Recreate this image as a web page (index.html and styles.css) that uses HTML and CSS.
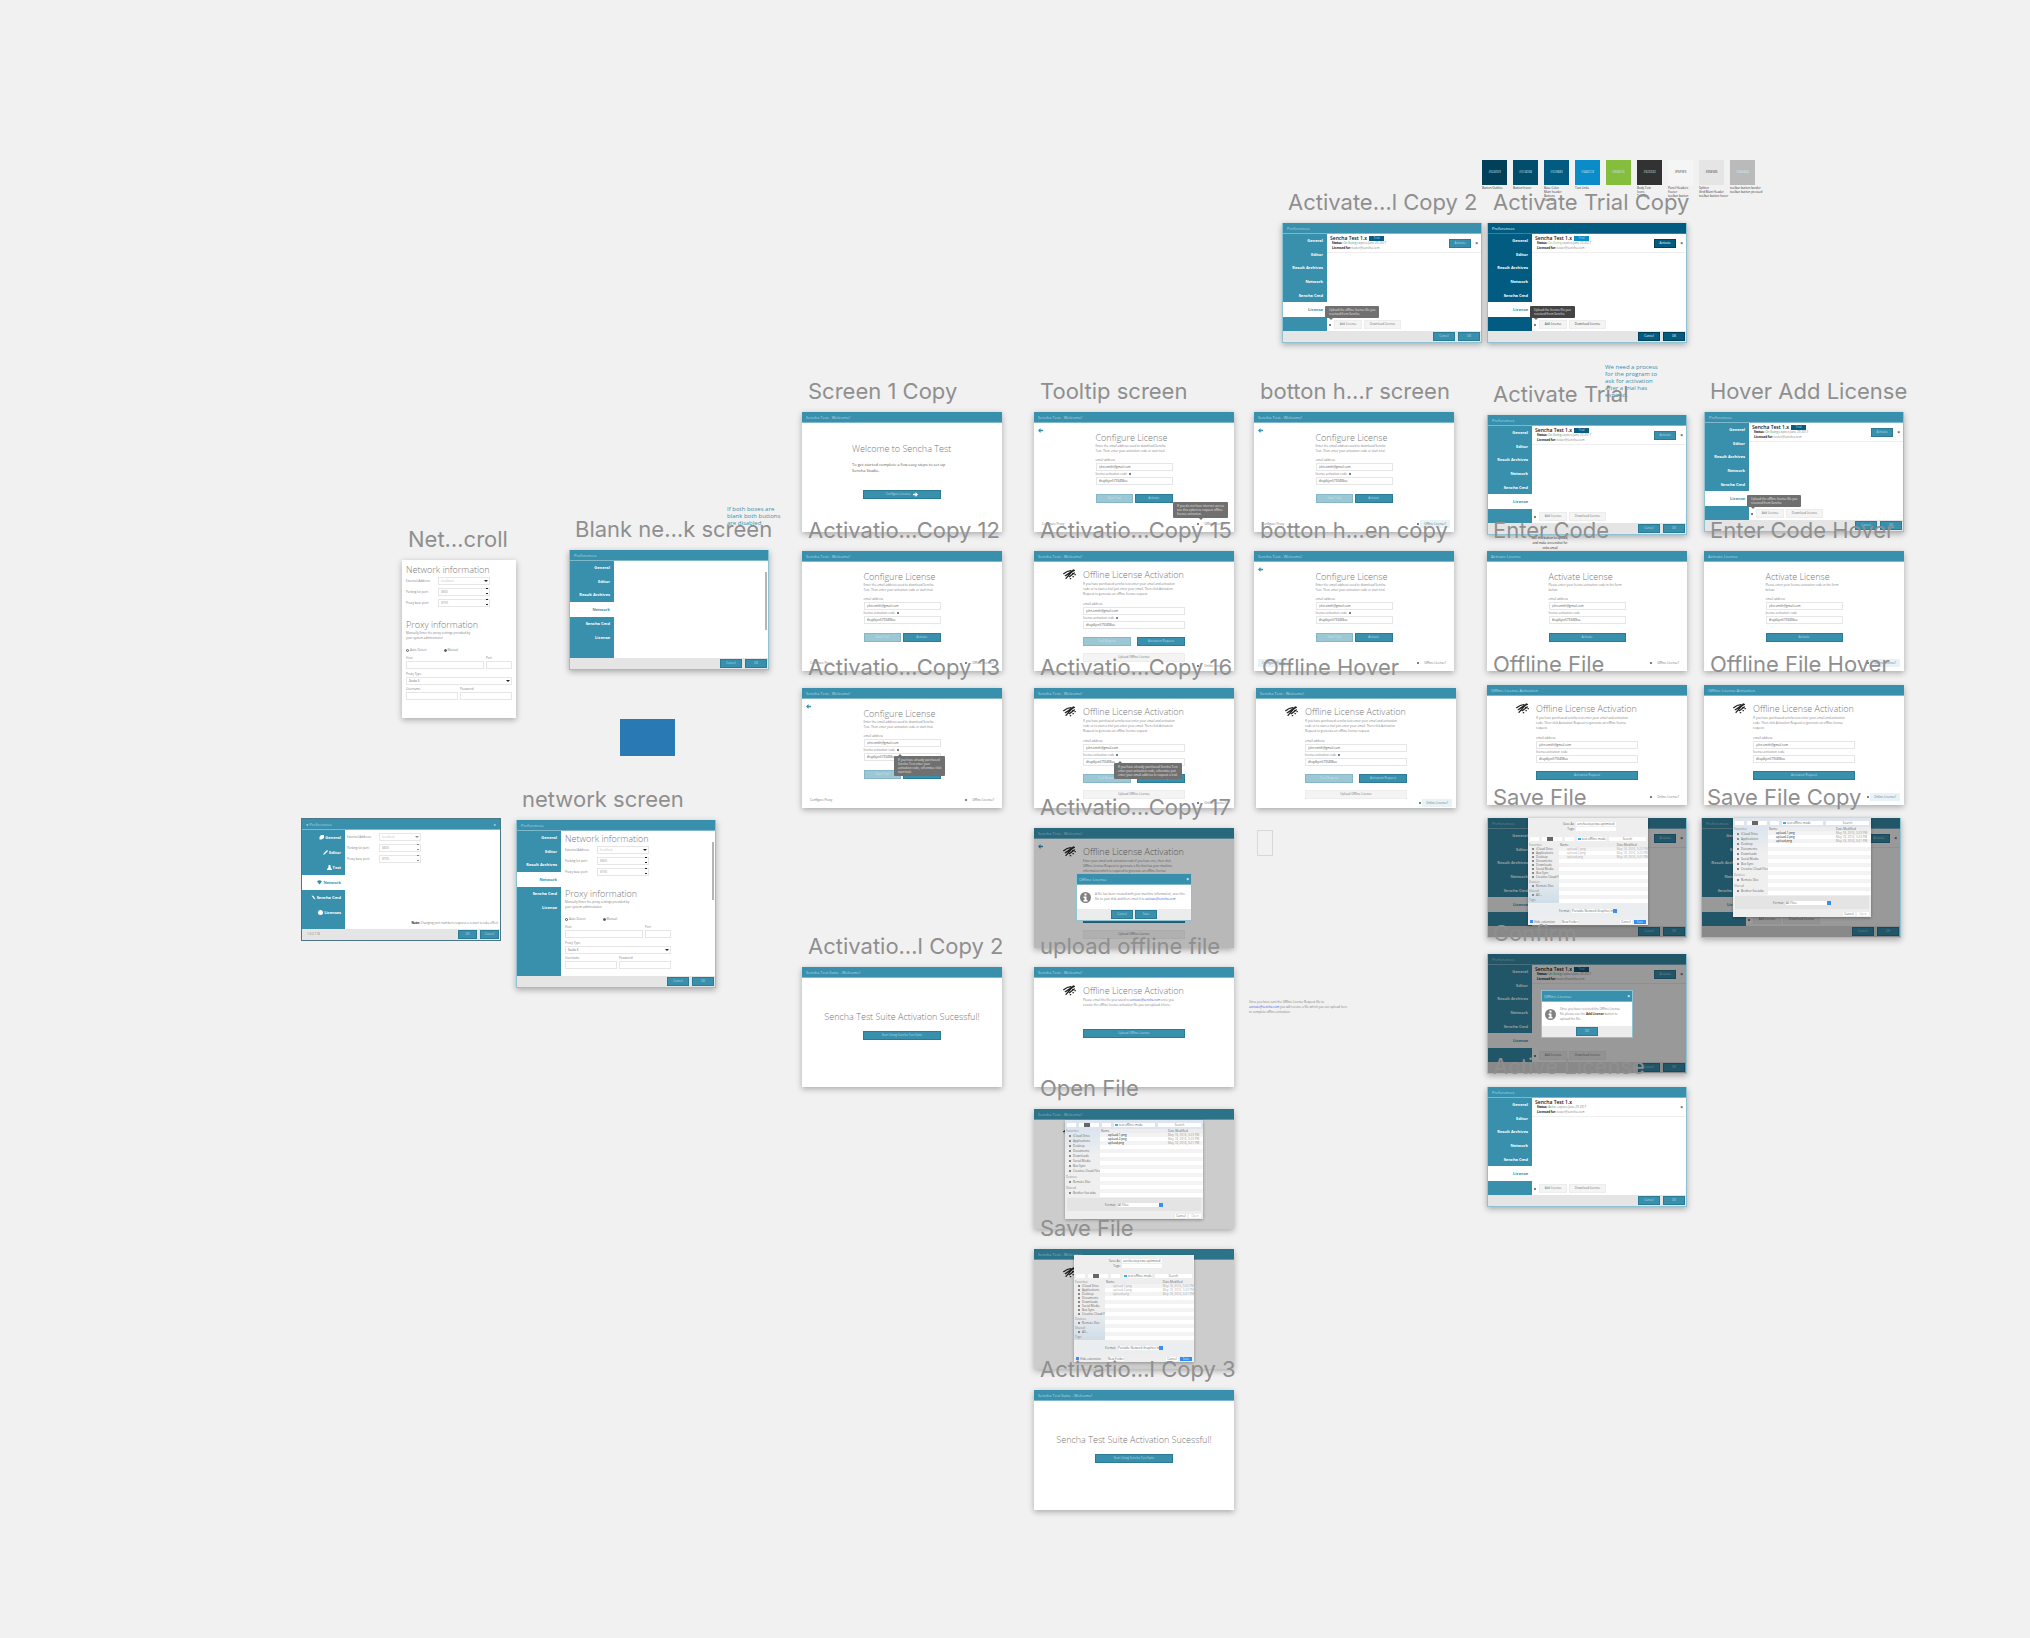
FILE: index.html
```
<!DOCTYPE html>
<html lang="en">
<head>
<meta charset="UTF-8" />
<meta name="viewport" content="width=device-width, initial-scale=1" />
<title>Sencha Test - Artboards</title>
<link rel="stylesheet" href="styles.css">
</head>
<body>

<main id="canvas"></main>

<script src="script.js"></script>
</body>
</html>
```

FILE: styles.css
```
* {
  box-sizing: border-box;
}
body {
  margin: 0;
  font-family: "Open Sans", "Noto Sans", sans-serif;
  background: #f1f1f1;
  color: #808080;
}
#canvas {
  position: relative;
  min-height: 100vh;
  font-size: 3px;
  line-height: 5px;
  overflow: hidden;
}
h2, p, figure, ul, table {
  margin: 0;
  padding: 0;
}
input, select, button {
  font: inherit;
  color: inherit;
  margin: 0;
  padding: 0;
  border: 0;
  border-radius: 0;
  background: none;
  appearance: none;
}
svg {
  display: block;
  fill: currentColor;
}

/* artboards */
.artboard {
  position: absolute;
  width: 200px;
}
.artboard figcaption {
  position: absolute;
  z-index: 1;
  left: 6px;
  top: -35px;
  font-family: Inter, sans-serif;
  font-size: 22px;
  line-height: 28px;
  color: #8f8f8f;
  white-space: nowrap;
}
.board {
  position: relative;
  display: flex;
  flex-direction: column;
  height: 120px;
  background: #fff;
  box-shadow: 0 2px 6px rgba(0,0,0,0.3);
}
.board.tall {
  height: 168px;
}
.titlebar {
  flex: none;
  display: flex;
  align-items: center;
  justify-content: space-between;
  height: 11px;
  padding: 0 4px;
  background: #3890ad;
  border-bottom: 1px solid #7fb8cb;
  color: #b9dae4;
  font-size: 4px;
}
.dim {
  position: absolute;
  inset: 0;
  background: rgba(0,0,0,0.4);
}
.dim.soft {
  background: rgba(0,0,0,0.28);
}
.dim.light {
  background: rgba(0,0,0,0.2);
}

/* buttons */
.btn {
  height: 9px;
  border: 1px solid #2b7b96;
  background: #3890ad;
  color: #b9dae4;
  font-size: 3px;
  line-height: 5px;
  text-align: center;
  flex: 1;
}
.btn.off {
  background: #9cc7d5;
  border-color: #86b7c8;
  color: #cde4eb;
}
.btn.plain {
  background: #f4f4f4;
  border-color: #ededed;
  color: #777;
}
.btn.small {
  flex: none;
  width: 22px;
}
.btn.wide {
  flex: none;
  width: 78px;
}
.buttons {
  display: flex;
  gap: 2px;
  margin-top: 9px;
}
.offline .buttons {
  margin-top: 8px;
}
.buttons.spaced {
  gap: 6px;
}
.btn svg {
  display: inline-block;
  vertical-align: middle;
  width: 5px;
  height: 5px;
  margin-left: 2px;
  color: #fff;
}

/* welcome, configure and offline screens */
.screen {
  position: relative;
  flex: 1;
  display: flex;
  flex-direction: column;
  align-items: center;
  padding: 9px 4px 4px;
}
.screen h2, .network h2 {
  font-size: 9px;
  line-height: 12px;
  font-weight: 300;
  color: #777;
  white-space: nowrap;
}
.form {
  width: 77px;
}
.form.offline {
  width: 102px;
}
.screen.top {
  padding-top: 7px;
}
.form p {
  margin-bottom: 4px;
  white-space: nowrap;
}
.form.offline p {
  margin-bottom: 5px;
  padding-top: 1px;
}
.field {
  display: block;
  margin-bottom: 1px;
}
.field span {
  display: block;
  line-height: 5px;
}
.field input, .pick select, .pick input {
  display: block;
  width: 100%;
  height: 8px;
  padding: 0 2px;
  background: #fff;
  border: 1px solid #e6e6e6;
  color: #555;
  line-height: 5px;
}
.pick select, .pick input {
  color: #999;
}
.pick.full select {
  color: #555;
}
.links {
  display: flex;
  justify-content: space-between;
  align-items: center;
  width: 100%;
  margin-top: auto;
}
.links a {
  padding: 2px 4px;
  line-height: 4px;
  color: #777;
  text-decoration: none;
}
.links a.hover {
  background: #e7f3f7;
}
.links div {
  display: flex;
  align-items: center;
  gap: 1px;
}
.dot {
  display: inline-block;
  width: 2px;
  height: 2px;
  border-radius: 50%;
  background: #555;
  vertical-align: middle;
}
.back {
  position: absolute;
  left: 4px;
  top: 5px;
  width: 5px;
  height: 5px;
  color: #3890ad;
}
.back svg {
  width: 5px;
  height: 5px;
}
.wifi {
  position: absolute;
  left: 29px;
  top: 7px;
  width: 13px;
  height: 11px;
  color: #222;
}
.welcome {
  padding-top: 20px;
}
.welcome .intro {
  width: 100px;
}
.welcome p {
  margin: 7px 0 16px;
  font-size: 4px;
  line-height: 6px;
  color: #555;
  white-space: nowrap;
}
.success {
  padding-top: 33px;
}
.success .btn {
  margin-top: 8px;
}
.upload-button {
  display: flex;
  margin-top: 7px;
}
.form.upload .buttons {
  margin-top: 21px;
}
.mail {
  color: #3b52e0;
}

/* preferences */
.prefs {
  border: 1px solid #8fc3d3;
  border-top: 0;
}
.prefs-main {
  flex: 1;
  display: flex;
  min-height: 0;
}
.sidebar {
  flex: none;
  display: flex;
  flex-direction: column;
  width: 44px;
  padding-bottom: 14px;
  background: #3890ad;
  color: #fff;
  list-style: none;
  font-size: 4px;
  font-weight: 700;
}
.tall .sidebar {
  padding-bottom: 62px;
}
.sidebar li {
  flex: 1;
  display: flex;
  align-items: center;
  justify-content: flex-end;
  gap: 1px;
  padding-right: 4px;
}
.sidebar li.active {
  flex: 0 0 15px;
  background: #fff;
  color: #3890ad;
}
.sidebar svg {
  width: 5px;
  height: 5px;
}
.prefs-content {
  position: relative;
  flex: 1;
  display: flex;
  flex-direction: column;
}
.bottombar {
  flex: none;
  display: flex;
  align-items: center;
  justify-content: flex-end;
  gap: 3px;
  height: 11px;
  padding: 0 1px;
  background: #e5e5e5;
}
.license {
  display: flex;
  align-items: center;
  gap: 4px;
  height: 19px;
  padding: 0 3px;
  border-bottom: 1px solid #eee;
}
.license-info {
  flex: 1;
  line-height: 5px;
}
.license-info strong {
  display: flex;
  align-items: center;
  gap: 2px;
  font-size: 5px;
  line-height: 6px;
  font-weight: 600;
  color: #111;
}
.license-info p {
  padding-left: 2px;
}
.license-info b {
  color: #111;
}
.license-info i {
  font-style: normal;
  color: #2f9f62;
}
.badge {
  width: 15px;
  background: #0a5d80;
  color: #b9dae4;
  font-size: 3px;
  line-height: 5px;
  font-weight: 400;
  text-align: center;
}
.close {
  color: #333;
  font-size: 5px;
  font-weight: 700;
}
.license-actions {
  display: flex;
  align-items: center;
  gap: 2px;
  margin: auto 0 2px 2px;
}
.license-actions .dot {
  margin-right: 1px;
}
.license-actions .plain {
  flex: none;
  width: 28px;
}
.license-actions .plain + .plain {
  width: 37px;
}
.dark .titlebar, .dark .sidebar, .dark .btn {
  background: #025b80;
}
.dark .titlebar {
  border-color: #3a7f9b;
  color: #fff;
}
.dark .btn {
  border-color: #024059;
  color: #fff;
}
.dark .btn.plain {
  background: #f4f4f4;
  border-color: #ededed;
  color: #444;
}
.dark .badge {
  background: #0a8cc8;
}
.dark .license-info i {
  color: #85bd3c;
}
.dark .tooltip {
  background: #444;
}

/* tooltips */
.tooltip {
  position: absolute;
  padding: 2px 4px;
  border-radius: 1px;
  background: #707070;
  color: #e4e4e4;
  line-height: 4px;
  white-space: nowrap;
}
.tooltip::after {
  content: "";
  position: absolute;
  left: 4px;
  top: 100%;
  border: 2px solid transparent;
  border-top-color: #707070;
  border-bottom: 0;
}
.tooltip.below::after {
  top: -2px;
  border: 2px solid transparent;
  border-bottom-color: #707070;
  border-top: 0;
}
.tooltip.add {
  left: -2px;
  bottom: 13px;
}
.tooltip.internet {
  right: 6px;
  bottom: 14px;
}
.tooltip.internet::after {
  left: 26px;
}
.tooltip.trial {
  left: 92px;
  top: 68px;
}
.tooltip.code {
  left: 80px;
  top: 75px;
}

/* network form */
.network {
  width: 114px;
  padding: 4px 4px 0;
}
.network-board {
  height: 158px;
}
.tall .network {
  padding-top: 2px;
}
.pick {
  position: relative;
  display: flex;
  align-items: center;
  width: 84px;
  margin-bottom: 3px;
}
.pick span {
  flex: none;
  width: 32px;
}
.pick:not(.spin):not(.full) select {
  color: #c4c4c4;
}
.pick.full {
  display: block;
  width: auto;
  margin: 0;
}
.pick.full span {
  display: block;
}
.pick::after {
  content: "";
  position: absolute;
  right: 2px;
  bottom: 3px;
  border: 2px solid transparent;
  border-top-color: #222;
  border-bottom: 0;
}
.pick.spin::after {
  bottom: 2px;
  width: 2px;
  height: 4px;
  border: solid #222;
  border-width: 1px 0;
}
.network h2 + .pick {
  margin-top: 1px;
}
.network .proxy {
  margin-top: 12px;
}
.radios {
  display: flex;
  gap: 17px;
  margin: 7px 0 3px;
}
.radios label {
  display: flex;
  align-items: center;
  gap: 1px;
}
.radios input {
  width: 3px;
  height: 3px;
  border: 1px solid #555;
  border-radius: 50%;
}
.radios input:checked {
  background: #555;
}
.pair {
  display: grid;
  grid-template-columns: 1fr 1fr;
  gap: 2px;
  margin: 2px 0;
}
.pair.host {
  grid-template-columns: 3fr 1fr;
}
.scrollbar {
  position: absolute;
  right: 1px;
  top: 11px;
  width: 2px;
  height: 58px;
  background: #b5b5b5;
}

/* first version of the preferences window */
.legacy {
  height: 123px;
  border: 1px solid #4c7685;
  box-shadow: none;
}
.legacy .sidebar {
  width: 43px;
  padding-bottom: 9px;
}
.legacy .prefs-content {
  padding: 3px 2px;
}
.legacy .pick {
  width: 74px;
}
.legacy .pick::after {
  opacity: 0.5;
}
.legacy .note {
  margin-top: auto;
  text-align: right;
}
.legacy .note b {
  color: #111;
}
.legacy .bottombar > span {
  margin: 0 auto 0 4px;
}
.legacy .bottombar .btn {
  width: 19px;
}

/* message dialogs */
.dialog {
  position: absolute;
  left: 42px;
  top: 45px;
  width: 116px;
  height: 48px;
  display: flex;
  flex-direction: column;
  background: #fff;
  border: 1px solid #8fc3d3;
}
.dialog.confirm {
  left: 53px;
  top: 36px;
  width: 92px;
}
.dialog .titlebar {
  padding: 0 2px;
}
.dialog .close {
  color: #fff;
}
.message {
  flex: 1;
  display: flex;
  align-items: center;
  gap: 4px;
  padding: 0 3px;
}
.message p {
  white-space: nowrap;
}
.message svg {
  flex: none;
  width: 11px;
  height: 11px;
}
.dialog .bottombar {
  justify-content: center;
  gap: 2px;
  background: #ececec;
}
.message b {
  color: #333;
}

/* file dialogs */
.finder {
  position: absolute;
  left: 31px;
  top: 11px;
  width: 138px;
  height: 99px;
  display: flex;
  flex-direction: column;
  background: #eee;
  color: #666;
  line-height: 4px;
  box-shadow: 0 1px 3px rgba(0,0,0,0.3);
}
.finder.save {
  left: 40px;
  top: 6px;
  width: 120px;
  height: 107px;
}
.finder.flush {
  top: 0;
}
.finder-name {
  display: flex;
  flex-direction: column;
  align-items: center;
  gap: 1px;
  padding: 4px 0 3px;
}
.finder-name label {
  display: grid;
  grid-template-columns: 14px 40px;
  gap: 1px;
  text-align: right;
}
.finder-name input {
  height: 4px;
  padding: 0 1px;
  background: #fff;
}
.finder-tools {
  flex: none;
  display: flex;
  align-items: center;
  gap: 3px;
  height: 9px;
  padding: 0 2px;
  background: #dfe5ee;
}
.save .finder-tools {
  background: #eee;
}
.finder-tools span, .finder-tools input {
  height: 4px;
  background: #fff;
}
.finder-tools .nav {
  width: 9px;
}
.finder-tools .views {
  width: 20px;
  border-left: 5px solid #fff;
  border-right: 9px solid #fff;
  background: #666;
}
.finder-tools .folder {
  flex: 1;
  padding-left: 1px;
  font-size: 3px;
}
.folder::before {
  content: "";
  display: inline-block;
  width: 3px;
  height: 2px;
  margin-right: 1px;
  background: #36b1ee;
}
.finder-tools input {
  width: 32%;
  text-align: center;
}
.finder-body {
  flex: 1;
  display: flex;
  min-height: 0;
  overflow: hidden;
}
.places {
  flex: none;
  width: 35px;
  padding: 0 0 0 4px;
  list-style: none;
  line-height: 5px;
  white-space: nowrap;
  background: linear-gradient(#dbe5f0, #efefef 40%);
}
.save .places {
  width: 31px;
  line-height: 4px;
  background: linear-gradient(#eee 50%, #cfdde9);
}
.places li::before {
  content: "";
  display: inline-block;
  width: 2px;
  height: 2px;
  margin-right: 2px;
  background: #888;
}
.places .group {
  margin-left: -3px;
  color: #888;
}
.places .group::before {
  content: none;
}
.places li + .group {
  margin-top: 1px;
}
.files {
  flex: 1;
  background: repeating-linear-gradient(#fff 0 4px, #f3f3f3 4px 8px);
}
.files table {
  width: 100%;
  border-collapse: collapse;
}
.files th, .files td {
  height: 4px;
  padding: 0 0 0 8px;
  font-size: 3px;
  line-height: 4px;
  text-align: left;
  font-weight: 400;
  white-space: nowrap;
}
.files th {
  padding-left: 1px;
  background: #ededed;
}
.files td:last-child {
  width: 35%;
  padding-left: 1px;
  color: #999;
}
.files td {
  color: #222;
}
.save .files td {
  color: #aaa;
}
.format {
  display: flex;
  justify-content: center;
  align-items: center;
  gap: 2px;
  height: 13px;
  margin: 1px 2px;
  background: #e4e4e4;
}
.save .format {
  background: #eaeef1;
}
.format select {
  width: 45px;
  height: 4px;
  line-height: 4px;
  background: #fff;
  border-right: 4px solid #3b8eef;
}
.finder-actions {
  display: flex;
  justify-content: flex-end;
  align-items: center;
  gap: 2px;
  height: 7px;
  padding: 0 2px;
}
.finder-actions button {
  width: 12px;
  height: 4px;
  background: #fff;
  line-height: 4px;
  text-align: center;
}
.finder-actions button:disabled {
  color: #bbb;
}
.finder-actions label {
  display: flex;
  align-items: center;
  gap: 1px;
  margin-right: 5px;
}
.finder-actions .new-folder {
  width: 16px;
  margin-right: auto;
}
.finder-actions input {
  width: 3px;
  height: 3px;
  background: #3b8eef;
}
.save .finder-actions button:last-child {
  background: #2f8cf5;
  color: #d5e8fd;
}

/* loose items around the artboards */
.swatches, .note-blue, .note-small, .note-mail, .block, .frame {
  position: absolute;
}
.swatches {
  left: 1482px;
  top: 160px;
  display: flex;
  gap: 6px;
}
.swatch {
  width: 25px;
  color: #333;
  line-height: 4px;
  white-space: pre;
}
.swatch div {
  height: 25px;
  margin-bottom: 1px;
  color: #cde4eb;
  line-height: 25px;
  text-align: center;
}
.swatch.pale div {
  color: #222;
}
.note-blue {
  font-size: 6px;
  line-height: 7px;
  color: #3890ad;
  white-space: pre;
}
.note-small {
  left: 1527px;
  top: 536px;
  width: 46px;
  color: #222;
  text-align: center;
  white-space: pre;
}
.note-mail {
  left: 1249px;
  top: 1000px;
  white-space: nowrap;
}
.block {
  left: 620px;
  top: 719px;
  width: 55px;
  height: 37px;
  background: #2879b4;
}
.frame {
  left: 1257px;
  top: 830px;
  width: 16px;
  height: 26px;
  border: 1px solid #d8d8d8;
}
```

FILE: script.js
```
const arrowLeft = '<svg viewBox="0 0 10 10"><path d="M0 5l5-5v3.5h5v3H5V10z"/></svg>';
const arrowRight = '<svg viewBox="0 0 10 10"><path d="M10 5L5 0v3.5H0v3h5V10z"/></svg>';
const info = '<svg viewBox="0 0 22 22"><path fill-rule="evenodd" d="M11 0a11 11 0 1 0 0 22a11 11 0 0 0 0-22zM9 3h4v4H9zM7 9h6v7h2v3H7v-3h2v-4H7z"/></svg>';
const wifiOff = `<svg class="wifi" viewBox="0 0 39 33" style="fill:none" stroke="currentColor" stroke-width="4" stroke-linecap="round">
  <path d="M2 14Q12 6 24 5M7 20Q18 11 34 4M9 28L31 3M19 23L34 12"/><path d="M22 29h1M30 23h1M36 17h1M29 13h1"/></svg>`;

const titlebar = (text, extra = '') => `<div class="titlebar"><span>${text}</span>${extra}</div>`;
const button = (text, cls = '') => `<button class="btn ${cls}">${text}</button>`;
const field = (label, value = '') => `<label class="field"><span>${label}</span><input type="text" value="${value}"></label>`;
const dot = '<i class="dot"></i>';

function links(left, right, hover) {
  return `<div class="links">
    ${left ? `<a href="#" class="${hover === 'left' ? 'hover' : ''}">${left}</a>` : '<span></span>'}
    <div>${dot}<a href="#" class="${hover === 'right' ? 'hover' : ''}">${right}</a></div>
  </div>`;
}

function welcome() {
  return `<div class="board">${titlebar('Sencha Test - Welcome!')}
    <div class="screen welcome">
      <div class="intro"><h2>Welcome to Sencha Test</h2>
      <p>To get started complete a few easy steps to set up<br>Sencha Studio.</p></div>
      ${button('Configure License ' + arrowRight, 'wide')}
    </div></div>`;
}

function success() {
  return `<div class="board">${titlebar('Sencha Test Suite - Welcome!')}
    <div class="screen success"><h2>Sencha Test Suite Activation Sucessful!</h2>
    ${button('Start Using Sencha Test Suite', 'wide')}</div></div>`;
}

function configure({ back, hover, tip = '' } = {}) {
  return `<div class="board">${titlebar('Sencha Test - Welcome!')}
    <div class="screen">
      ${back ? `<a class="back" href="#" aria-label="Back">${arrowLeft}</a>` : ''}
      <div class="form">
        <h2>Configure License</h2>
        <p>Enter the email address used to download Sencha<br>Test. Then enter your activation code or start trial.</p>
        ${field('email address', 'john.smith@gmail.com')}
        ${field('license activation code &nbsp;' + dot, 'dhajdkjsn5793498su')}
        <div class="buttons">${button('Start Trial', 'off')}${button('Activate')}</div>
      </div>
      ${links('Configure Proxy', 'Offline License?', hover)}
    </div>${tip}</div>`;
}

function enterCode(hover) {
  return `<div class="board">${titlebar('Activate License')}
    <div class="screen">
      <div class="form">
        <h2>Activate License</h2>
        <p>Please enter your license activation code in the form<br>below:</p>
        ${field('email address', 'john.smith@gmail.com')}
        ${field('license activation code', 'dhajdkjsn5793498su')}
        <div class="buttons">${button('Activate')}</div>
      </div>
      ${links('', 'Offline License?', hover)}
    </div></div>`;
}

const purchased = 'If you have purchased sencha test enter your email and activation<br>code or to start a trial just enter your email. Then click Activation<br>Request to generate an offline license request.';

function offline({ title = 'Sencha Test - Welcome!', text = purchased, back, hover, single, upload = true, online = true, over = '' } = {}) {
  const actions = single
    ? `<div class="buttons">${button(single)}</div>`
    : `<div class="buttons spaced">${button('Trial Request', 'off')}${button('Activation Request')}</div>`;
  return `<div class="board">${titlebar(title)}
    <div class="screen top">
      ${back ? `<a class="back" href="#" aria-label="Back">${arrowLeft}</a>` : ''}
      ${wifiOff}
      <div class="form offline">
        <h2>Offline License Activation</h2>
        <p>${text}</p>
        ${field('email address', 'john.smith@gmail.com')}
        ${field('license activation code' + (upload ? ' &nbsp;' + dot : ''), 'dhajdkjsn5793498su')}
        ${actions}
        ${upload ? `<div class="upload-button">${button('Upload Offline License', 'plain')}</div>` : ''}
      </div>
      ${online ? links('', 'Online License?', hover) : ''}
    </div>${over}</div>`;
}

function offlineFile(hover) {
  return offline({
    title: 'Offline License Activation',
    text: 'If you have purchased sencha test enter your email and activation<br>code. Then click Activation Request to generate an offline license<br>request.',
    single: 'Activation Request', upload: false, hover
  });
}

function uploadFile() {
  return `<div class="board">${titlebar('Sencha Test - Welcome!')}
    <div class="screen top">${wifiOff}
      <div class="form offline upload">
        <h2>Offline License Activation</h2>
        <p>Please email the file you saved to <span class="mail">activate@sencha.com</span> once you<br>receive the offline license activation file you can upload it here.</p>
        <div class="buttons">${button('Upload Offline License')}</div>
      </div>
    </div></div>`;
}

function sidebar(items, active, icons = {}) {
  return `<ul class="sidebar">${items.map(item =>
    `<li class="${item === active ? 'active' : ''}">${icons[item] || ''}${item}</li>`).join('')}</ul>`;
}
const sections = ['General', 'Editor', 'Result Archives', 'Network', 'Sencha Cmd', 'License'];

function prefs({ content = '', active = 'License', cls = '', over = '' }) {
  return `<div class="board prefs ${cls}">${titlebar('Preferences')}
    <div class="prefs-main">${sidebar(sections, active)}<div class="prefs-content">${content}</div></div>
    <div class="bottombar">${button('Cancel', 'small')}${button('OK', 'small')}</div>${over}</div>`;
}

function license({ status = 'On Going', trial = true, tip = '', cls = '', over = '' } = {}) {
  return prefs({ cls, over, content: `
    <div class="license">
      <div class="license-info">
        <strong>Sencha Test 1.x ${trial ? '<span class="badge">Trial</span>' : ''}</strong>
        <p><b>Status:</b> <i>${status}</i> expires June 29 2017<br><b>Licensed for:</b> tester@sencha.com</p>
      </div>
      ${trial ? button('Activate', 'small') : ''}<span class="close">×</span>
    </div>
    <div class="license-actions">${dot}${button('Add License', 'plain')}${button('Download License', 'plain')}</div>
    ${tip ? `<div class="tooltip add">${tip}</div>` : ''}` });
}

const ports = `
  <label class="pick"><span>External Address:</span><select><option>localhost</option></select></label>
  <label class="pick spin"><span>Parking lot port:</span><input type="text" value="8800"></label>
  <label class="pick spin"><span>Proxy base port:</span><input type="text" value="8700"></label>`;

function network(name) {
  return `<div class="network">
    <h2>Network information</h2>${ports}
    <h2 class="proxy">Proxy information</h2>
    <p>Manually Enter the proxy settings provided by<br>your system administrator</p>
    <div class="radios">
      <label><input type="radio" name="${name}">Auto Detect</label>
      <label><input type="radio" name="${name}" checked>Manual</label>
    </div>
    <div class="pair host">${field('Host')}${field('Port')}</div>
    <label class="pick full"><span>Proxy Type</span><select><option>Socks 5</option></select></label>
    <div class="pair">${field('Username')}${field('Password')}</div>
  </div>`;
}

const icons = {
  General: '<svg viewBox="0 0 10 10"><path d="M4 0h6v6L5 9H1V4z"/></svg>',
  Editor: '<svg viewBox="0 0 10 10"><path d="M8 0l2 2-6 6-4 2 2-4z"/></svg>',
  Test: '<svg viewBox="0 0 10 10"><path d="M3 0h4v4l3 5v1H0V9l3-5z"/></svg>',
  Network: '<svg viewBox="0 0 10 10"><path d="M0 3q5-5 10 0L5 9z"/></svg>',
  'Sencha Cmd': '<svg viewBox="0 0 10 10"><path d="M1 1l4 1 4 7-3-1z"/></svg>',
  Licenses: '<svg viewBox="0 0 10 10"><circle cx="5" cy="5" r="5"/></svg>'
};

function legacy() {
  return `<div class="board legacy">${titlebar('● Preferences', '<span>●</span>')}
    <div class="prefs-main">${sidebar(Object.keys(icons), 'Network', icons)}
      <div class="prefs-content">${ports}
        <p class="note"><b>Note:</b> Changing port numbers requires a restart to take effect</p>
      </div></div>
    <div class="bottombar"><span>1.0.2.118</span>${button('OK', 'small')}${button('Cancel', 'small')}</div></div>`;
}

function dialog(text, buttons, cls = '') {
  return `<div class="dialog ${cls}">${titlebar('Offline License', '<span class="close">×</span>')}
    <div class="message">${info}<p>${text}</p></div>
    <div class="bottombar">${buttons.map(b => button(b, 'small')).join('')}</div></div>`;
}

function finder(save, cls = '') {
  const group = text => `<li class="group">${text}</li>`;
  const places = ['iCloud Drive', 'Applications', 'Desktop', 'Documents', 'Downloads', 'Social Media', 'Box Sync', 'Creative Cloud Files'];
  return `<div class="finder ${save ? 'save' : ''} ${cls}">
    ${save ? `<div class="finder-name">
      <label>Save As: <input type="text" value="sencha-step-two-optimized"></label>
      <label>Tags: <input type="text"></label></div>` : ''}
    <div class="finder-tools"><span class="nav"></span><span class="views"></span><span class="nav"></span>
      <span class="folder">test offline mode</span><input type="text" placeholder="Search" aria-label="Search"></div>
    <div class="finder-body">
      <ul class="places">${group('Favorites')}${places.map(p => `<li>${p}</li>`).join('')}
        ${group('Devices')}<li>Remote Disc</li>${group('Shared')}<li>${save ? 'All...' : 'Brother fax-tabs'}</li>${save ? group('Tags') : ''}</ul>
      <div class="files"><table>
        <tr><th>Name</th><th>Date Modified</th></tr>
        <tr><td>upload-1.png</td><td>May 18, 2016, 3:23 PM</td></tr>
        <tr><td>upload-2.png</td><td>May 18, 2016, 3:23 PM</td></tr>
        <tr><td>upload.png</td><td>May 18, 2016, 3:21 PM</td></tr>
      </table></div>
    </div>
    <label class="format">Format: <select><option>${save ? 'Portable Network Graphics Image' : 'All Files'}</option></select></label>
    <div class="finder-actions">
      ${save ? '<label><input type="checkbox" checked>Hide extension</label><button class="new-folder">New Folder</button>' : ''}
      <button>Cancel</button>${save ? '<button>Save</button>' : '<button disabled>Open</button>'}</div>
  </div>`;
}

const dim = cls => `<div class="dim ${cls || ''}"></div>`;
const tip = (cls, text) => `<div class="tooltip ${cls}">${text}</div>`;
const saved = `A file has been created with your machine information, save this<br>file to your disk and then email it to <span class="mail">activate@sencha.com</span>`;
const received = 'Once you have received the Offline License<br>file please use the <b>Add License</b> button to<br>upload the file.';

// x, y, name, markup
const artboards = [
  [1282, 223, 'Activate…l Copy 2', license({ tip: 'Upload the offline license file you<br>received from Sencha' })],
  [1487, 223, 'Activate Trial Copy', license({ cls: 'dark', tip: 'Upload the license file you<br>received from Sencha' })],
  [1487, 415, 'Activate Trial', license()],
  [1704, 412, 'Hover Add License', license({ tip: 'Upload the offline license file you<br>received from Sencha' })],
  [1487, 551, 'Enter Code', enterCode()],
  [1704, 551, 'Enter Code Hover', enterCode('right')],
  [1487, 685, 'Offline File', offlineFile()],
  [1704, 685, 'Offline File Hover', offlineFile('right')],
  [1487, 818, 'Save File', license({ over: dim() + finder(true, 'flush') })],
  [1701, 818, 'Save File Copy', license({ over: dim() + finder(false, 'flush') })],
  [1487, 954, 'Confirm', license({ over: dim() + dialog(received, ['OK'], 'confirm') })],
  [1487, 1087, 'Active License', license({ status: 'Active', trial: false })],
  [802, 412, 'Screen 1 Copy', welcome()],
  [802, 551, 'Activatio…Copy 12', configure()],
  [802, 688, 'Activatio…Copy 13', configure({ back: true, tip: tip('trial below', 'If you have already purchased<br>Sencha Test enter your<br>activation code, otherwise click<br>start trial.') })],
  [802, 967, 'Activatio…l Copy 2', success()],
  [1034, 412, 'Tooltip screen', configure({ back: true, tip: tip('internet', 'If you do not have internet access<br>use this option to request offline<br>license activation.') })],
  [1034, 551, 'Activatio…Copy 15', offline()],
  [1034, 688, 'Activatio…Copy 16', offline({ over: tip('code below', 'If you have already purchased Sencha Test<br>enter your activation code, otherwise just<br>enter your email address to request a trial.') })],
  [1034, 828, 'Activatio…Copy 17', offline({ back: true, single: 'Offline License Request', online: false,
    text: 'Enter your email and activation code if you have one, then click<br>Offline License Request to generate a file that has your machine<br>information which is required to generate an offline license.',
    over: dim('soft') + dialog(saved, ['Cancel', 'Save']) })],
  [1034, 967, 'upload offline file', uploadFile()],
  [1034, 1109, 'Open File', offline({ online: false, over: dim('light') + finder(false) })],
  [1034, 1249, 'Save File', offline({ online: false, over: dim('light') + finder(true) })],
  [1034, 1390, 'Activatio…l Copy 3', success()],
  [1254, 412, 'botton h…r screen', configure({ back: true, hover: 'right' })],
  [1254, 551, 'botton h…en copy', configure({ back: true, hover: 'left' })],
  [1256, 688, 'Offline Hover', offline({ hover: 'right' })],
  [402, 560, 'Net…croll', `<div class="board network-board">${network('scroll')}</div>`],
  [569, 550, 'Blank ne…k screen', prefs({ active: 'Network', content: '<div class="scrollbar"></div>' })],
  [516, 820, 'network screen', prefs({ active: 'Network', cls: 'tall', content: network('screen') + '<div class="scrollbar"></div>' })],
  [301, 818, '', legacy()]
];

const swatches = [
  ['#024059', 'Button Outline'],
  ['#014D6B', 'Button hover'],
  ['#025B80', 'Base Color\nMain header\nButtons\nSide bar'],
  ['#0A8CC8', 'Text Links'],
  ['#85BD3C', ''],
  ['#323232', 'Body Text\nIcons\nTooltips'],
  ['#F5F5F5', 'Panel Headers\nFooter\ntoolbar button', 'pale'],
  ['#E5E5E5', 'Splitter\nGrid Main Header\ntoolbar button hover', 'pale'],
  ['#BABABA', 'toolbar button border\ntoolbar button pressed']
];

document.getElementById('canvas').innerHTML = `
  <div class="swatches">${swatches.map(([color, text, cls]) =>
    `<div class="swatch ${cls || ''}"><div style="background:${color}">${color}</div>${text}</div>`).join('')}</div>
  <p class="note-blue" style="left:1605px;top:364px">We need a process\nfor the program to\nask for activation\nafter a trial has\nexpired.</p>
  <p class="note-blue" style="left:727px;top:506px">If both boxes are\nblank both buttons\nare disabled</p>
  <p class="note-small">use this button to upload,\nand make screenshot for\nvicks email</p>
  <p class="note-mail">Once you have sent the Offline License Request file to<br><span class="mail">activate@sencha.com</span> you will receive a file which you can upload here<br>to complete offline activation.</p>
  <div class="block"></div>
  <div class="frame"></div>
  ${artboards.map(([x, y, name, markup]) =>
    `<figure class="artboard" style="left:${x}px;top:${y}px${name === 'Net…croll' ? ';width:114px' : ''}">
      ${name ? `<figcaption>${name}</figcaption>` : ''}${markup}</figure>`).join('')}`;
```
